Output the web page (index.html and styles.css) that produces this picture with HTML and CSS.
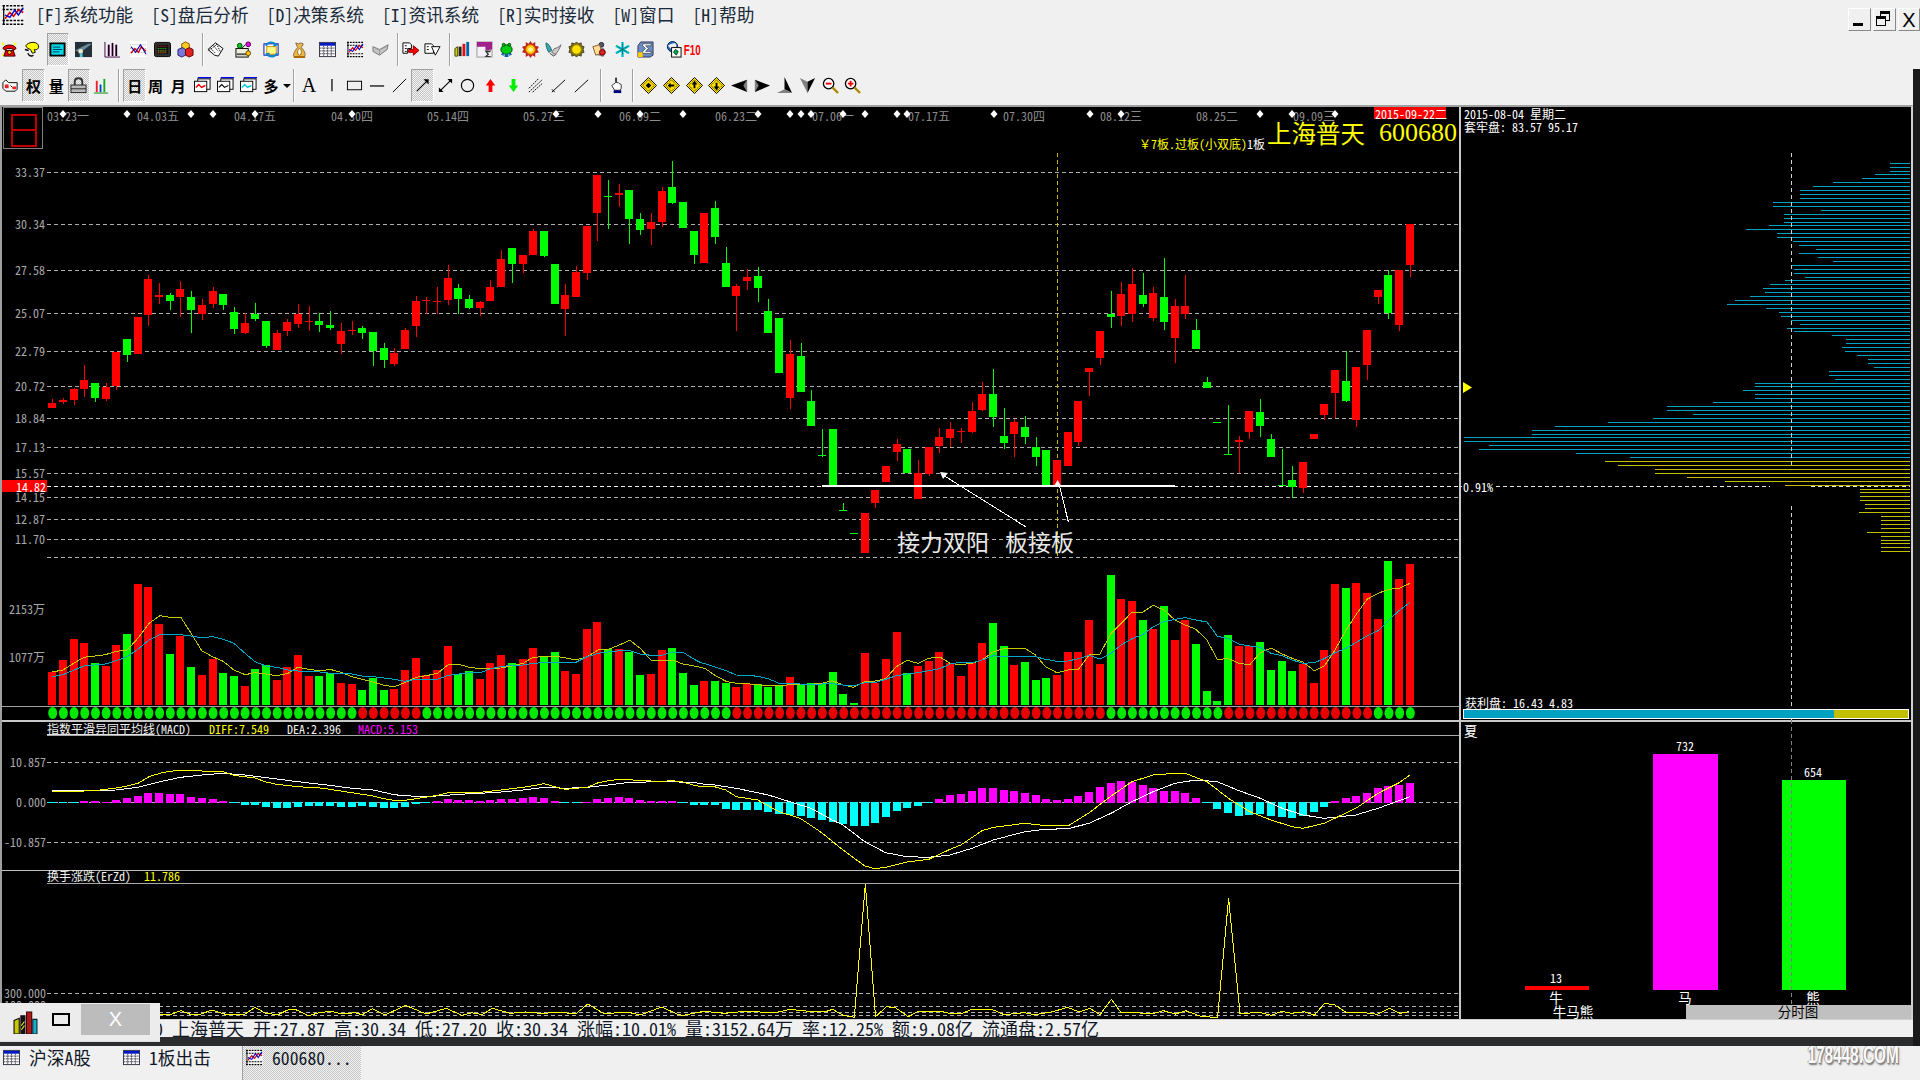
FILE: index.html
```html
<!DOCTYPE html>
<html lang="zh">
<head>
<meta charset="utf-8">
<title>上海普天 600680</title>
<link rel="stylesheet" href="styles.css">
</head>
<body>
<svg class="defs" aria-hidden="true">
  <symbol id="logo" viewBox="0 0 18 18">
    <rect width="18" height="18" fill="#f4f4f4"/>
    <path d="M0 1.500h18M0 4.500h18M0 13.500h18M0 16.500h18" stroke="#000" stroke-width="1.200" stroke-dasharray="2 1"/>
    <path d="M1 1v16" stroke="#000"/>
    <path d="M2 12l4-5 3 3 4-5 4 2" fill="none" stroke="#d00" stroke-width="1.300"/>
    <path d="M2 9l4 2 4-6 3 4 4-6" fill="none" stroke="#00c" stroke-width="1.100"/>
  </symbol>
  <symbol id="table" viewBox="0 0 18 18">
    <rect x=".5" y="1.500" width="17" height="15" fill="#fff" stroke="#334"/>
    <rect x="1" y="2" width="16" height="3" fill="#0018c8"/>
    <path d="M1 7.500h16M1 10.500h16M1 13.500h16M5 5v11M9 5v11M13 5v11" stroke="#445" stroke-dasharray="1.500 .5"/>
  </symbol>
  <symbol id="diamond" viewBox="0 0 18 18">
    <path d="M9 .5L17.500 9 9 17.500 .5 9z" fill="#ffe000" stroke="#000"/>
    <path d="M9 3L15 9 9 15 3 9z" fill="none" stroke="#000" stroke-dasharray="1 1"/>
  </symbol>
</svg>

<header class="menubar">
  <svg class="logo"><use href="#logo"/></svg>
  <nav class="menu">
    <span>[F]系统功能</span><span>[S]盘后分析</span><span>[D]决策系统</span><span>[I]资讯系统</span><span>[R]实时接收</span><span>[W]窗口</span><span>[H]帮助</span>
  </nav>
  <div class="winbtns">
    <button class="wb" aria-label="最小化"><i class="wb-min"></i></button>
    <button class="wb" aria-label="还原"><i class="wb-r1"></i><i class="wb-r2"></i></button>
    <button class="wb wb-x" aria-label="关闭">X</button>
  </div>
</header>

<div class="toolbar t1">
  <span class="b first"><svg viewBox="0 0 18 18"><path d="M1 2l2 2M16 2l-2 2M1 15l2-1" stroke="#ff0" stroke-width="2"/><path d="M2 8c1-5 13-5 14 0l-3 2-1-2H6L5 10z" fill="#e00" stroke="#300"/><path d="M3 16l2-6h8l2 6z" fill="#e00" stroke="#300"/><circle cx="9" cy="12" r="2" fill="#fc0" stroke="#300"/></svg></span>
  <span class="b"><svg viewBox="0 0 18 18"><path d="M3 5c2-4 11-5 13-1s-2 6-4 5l1 3-3 1-2-4C6 8 4 8 3 5z" fill="#ff0" stroke="#000"/><path d="M2 9l4 1M5 13c2 4 5 3 6 2" fill="none" stroke="#000" stroke-width="1.500"/></svg></span>
  <span class="b g4 on"><svg viewBox="0 0 18 18"><rect x=".5" y="1.500" width="17" height="15" rx="1" fill="#000"/><rect x="2.500" y="3.500" width="13" height="11" fill="#00d8e8"/><path d="M4 6.500h8M4 9h10M4 11.500h7" stroke="#003a60"/></svg></span>
  <span class="b g4"><svg viewBox="0 0 18 18"><rect width="18" height="16" y="1" fill="#243038"/><path d="M0 10L14 3l4 0-12 9z" fill="#6a8a9a"/><circle cx="6" cy="11" r="2.500" fill="#e8e8c8"/><path d="M5 13h3v4H5z" fill="#5cc8e0"/></svg></span>
  <span class="b g7"><svg viewBox="0 0 18 18"><path d="M1 1v16h16" fill="none" stroke="#404"/><path d="M4 4h2v12H4zM8 2h2v14H8zM12 4h2v12h-2z" fill="#606"/><path d="M5 4v12M9 2v14M13 4v12" stroke="#000"/></svg></span>
  <span class="b g4"><svg viewBox="0 0 18 18"><rect width="18" height="17" fill="#fff"/><path d="M0 4h18M0 8h18M0 12h18" stroke="#aaa" stroke-dasharray="1 1"/><path d="M1 13l4-5 4 4 3-6 5 5" fill="none" stroke="#d00" stroke-width="1.400"/><path d="M1 6l5 6 5-8 6 10" fill="none" stroke="#00a" stroke-width="1.100"/></svg></span>
  <span class="b g2"><svg viewBox="0 0 18 18"><rect x=".5" y="1.500" width="17" height="15" rx="2" fill="#333" stroke="#000"/><rect x="3" y="4" width="12" height="10" fill="#111"/><path d="M4 5.500h10" stroke="#e22" stroke-dasharray="1 1"/><path d="M4 8h10" stroke="#2e2" stroke-dasharray="1 1"/><path d="M4 10.500h10" stroke="#ee2" stroke-dasharray="1 1"/><path d="M4 12.500h10" stroke="#e82" stroke-dasharray="1 1"/></svg></span>
  <span class="b g1"><svg viewBox="0 0 18 18"><path d="M9 1l4 2v5l-4 2-4-2V3z" fill="#fc2" stroke="#850"/><path d="M1 9l5-2 3 2v6l-4 2-4-2z" fill="#77d" stroke="#226"/><path d="M9 9l4-2 4 2v6l-4 2-4-2z" fill="#d22" stroke="#600"/></svg></span>
  <i class="sep"></i>
  <span class="b"><svg viewBox="0 0 18 18"><path d="M9 2L17 8l-5 8-4-1-7-6z" fill="#fff" stroke="#000"/><path d="M4 8l5 5M7 5l5 6M10 3l4 8M2 10l8-6" stroke="#000" stroke-dasharray="1.500 1"/></svg></span>
  <span class="b g6"><svg viewBox="0 0 18 18"><rect x="1" y="8" width="13" height="9" fill="#eed" stroke="#000"/><path d="M2 14h10" stroke="#555" stroke-width="2"/><circle cx="5" cy="5" r="2.500" fill="#0c2" stroke="#040"/><circle cx="14" cy="3.500" r="2.500" fill="#e0e" stroke="#404"/><circle cx="14" cy="13" r="2.500" fill="#fc0" stroke="#640"/><path d="M7 8l4-4" stroke="#000"/></svg></span>
  <span class="b g6"><svg viewBox="0 0 18 18"><rect x="1" y="3" width="15" height="12" fill="#fff" stroke="#00a"/><rect x="4" y="6" width="10" height="8" fill="#ff8" stroke="#c80"/><path d="M3 5c3-5 8-4 11-1l-3 1M15 13c-3 5-8 4-11 1l3-1" fill="none" stroke="#08c" stroke-width="2"/></svg></span>
  <span class="b g6"><svg viewBox="0 0 18 18"><path d="M5 17c-3 0-3-2-1-6 1-2 2-3 3-4L5 2l3 1 2-1 3 1-2 4c2 2 4 5 4 7 0 2-1 3-3 3z" fill="#e8b848" stroke="#864"/><ellipse cx="9" cy="11.500" rx="2" ry="3.500" fill="#fff" stroke="#a60"/><path d="M3 17h12" stroke="#a60" stroke-width="2"/></svg></span>
  <span class="b g6"><svg class="ic16"><use href="#table"/></svg></span>
  <span class="b g6"><svg viewBox="0 0 18 18"><use href="#logo"/></svg></span>
  <span class="b g3"><svg viewBox="0 0 18 18"><path d="M1 6l7 3 9-5-1 5-8 6-7-4z" fill="#c4c4c4" stroke="#777"/><path d="M8 9v6M3 7l5 3M9 9l6-3" stroke="#999"/></svg></span>
  <i class="sep"></i>
  <span class="b"><svg viewBox="0 0 18 18"><path d="M1 2h7l2 2v4H6v5H1z" fill="#fff" stroke="#000"/><path d="M3 5h2M3 8h2M3 11h2" stroke="#000"/><path d="M7 9h5V5l6 5-6 5v-3H7z" fill="#f00" stroke="#800"/></svg></span>
  <span class="b"><svg viewBox="0 0 18 18"><path d="M1 3h7l2 2v8H1z" fill="#fff" stroke="#000"/><path d="M3 6h2M3 9h2" stroke="#000"/><path d="M8 6h9l-5 9z" fill="#fff" stroke="#000"/></svg></span>
  <i class="sep"></i>
  <span class="b"><svg viewBox="0 0 18 18"><path d="M1 8l3-2v10H1z" fill="#cc0" stroke="#440"/><path d="M5 6h3v10H5z" fill="#222"/><path d="M9 3h3v13H9z" fill="#d11"/><path d="M13 1h3v15h-3z" fill="#06a"/></svg></span>
  <span class="b"><svg viewBox="0 0 18 18"><rect x="1" y="1" width="16" height="16" fill="#f4f0f8" stroke="#999"/><path d="M1 1h16v8l-7 1v-4H1z" fill="#a0208c"/><path d="M9 10h7l-1 2h-3l2 2-2 2h3l1 1H9l3-3z" fill="#333"/></svg></span>
  <span class="b"><svg viewBox="0 0 18 18"><ellipse cx="9" cy="9" rx="6" ry="5" fill="#0c1"  stroke="#040"/><circle cx="6" cy="4" r="1.500" fill="#0c1" stroke="#040"/><circle cx="12" cy="4" r="1.500" fill="#0c1" stroke="#040"/><path d="M3 14l3-2v4zM15 14l-3-2v4zM7 14h4v3H7z" fill="#005ca8"/></svg></span>
  <span class="b g2"><svg viewBox="0 0 18 18"><path d="M9 0l2 3 3-2v4l4 1-2 3 2 3-4 1v4l-3-2-2 3-2-3-3 2v-4l-4-1 2-3-2-3 4-1V1l3 2z" fill="#b22"/><circle cx="9" cy="9" r="5" fill="#ffd000" stroke="#e60"/><circle cx="9" cy="9" r="2.500" fill="#fff8a0"/></svg></span>
  <span class="b g1"><svg viewBox="0 0 18 18"><path d="M1 2c3 1 5 4 6 8l-3 2C2 9 1 5 1 2z" fill="#3aa8b0" stroke="#266"/><path d="M17 4c-2 5-4 8-6 10l-4-2 3-4c2 0 5-2 7-4z" fill="#ccc" stroke="#666"/><path d="M5 13l4 3 3-2" fill="#bbb" stroke="#555"/></svg></span>
  <span class="b g1"><svg viewBox="0 0 18 18"><path d="M9 1l2 2 3-1v3l3 1-1 3 1 3-3 1v3l-3-1-2 2-2-2-3 1v-3l-3-1 1-3-1-3 3-1V2l3 1z" fill="#7a7000" stroke="#443"/><circle cx="9" cy="9" r="5" fill="#ffe000" stroke="#a80"/></svg></span>
  <span class="b g1"><svg viewBox="0 0 18 18"><circle cx="11" cy="4" r="2.500" fill="#556" stroke="#223"/><path d="M7 8l6-1 3 5-3 5-6-2z" fill="#889"/><path d="M2 6l7-2 3 9-7 2z" fill="#ffdf90" stroke="#853"/><circle cx="12" cy="12" r="3" fill="#d22" stroke="#600"/></svg></span>
  <span class="b g1"><svg viewBox="0 0 18 18"><path d="M9 1v16M2 5l14 8M16 5L2 13" stroke="#00bcc8" stroke-width="2.400"/><path d="M9 3v12M4 6l10 6M14 6L4 12" stroke="#000" stroke-width=".6" stroke-dasharray="1 1"/></svg></span>
  <span class="b g1"><svg viewBox="0 0 18 18"><path d="M4 1h13v14l-3 2H1V5z" fill="#6a8cc0" stroke="#335"/><path d="M6 3h9v2H9l3 3-3 3h6v2H6v-2l3-3-3-3z" fill="#fff" stroke="#000" stroke-width=".5"/><rect x="1" y="12" width="5" height="5" fill="#fc0"/></svg></span>
  <span class="b g6"><svg viewBox="0 0 18 18"><circle cx="8" cy="6" r="5.500" fill="#1868c8" stroke="#024"/><path d="M3 5c3-2 8-4 9-1s-3 4-5 5" fill="#eee"/><rect x="7" y="7" width="10" height="10" fill="#fff" stroke="#000"/><path d="M9 12l2-3 3 2-2 4z" fill="#0a6" stroke="#040"/></svg></span>
  <span class="b f10">F10</span>
</div>

<main class="frame">
  <div class="col">
    <div class="toolbar t2">
      <span class="b first2"><svg viewBox="0 0 18 18"><path d="M1 6l3-3 3 3h9v7l-2 2H4l-3-3z" fill="#fff" stroke="#000"/><path d="M3 8h4v4H3zM11 10h4v3h-4z" fill="#e22"/><path d="M9 9l2 2" stroke="#000"/></svg></span>
      <span class="b on tx">权</span>
      <span class="b tx">量</span>
      <span class="b on"><svg viewBox="0 0 18 18"><path d="M5 9V5c0-5 8-5 8 0v4" fill="none" stroke="#333" stroke-width="2"/><rect x="1" y="8.500" width="16" height="8" fill="#bbb" stroke="#222"/><path d="M1 12.500h16" stroke="#222"/></svg></span>
      <span class="b"><svg viewBox="0 0 18 18"><path d="M4 4v12" stroke="#e22" stroke-width="2"/><path d="M8 8v8" stroke="#14c" stroke-width="2"/><path d="M12 2v14" stroke="#1a2" stroke-width="2"/><path d="M1 17h15" stroke="#080"/></svg></span>
      <i class="sep s2"></i>
      <span class="b on tx">日</span>
      <span class="b tx gm2">周</span>
      <span class="b tx">月</span>
      <span class="b g2"><svg viewBox="0 0 18 18"><path d="M4 .5h14" stroke="#00f" stroke-width="2"/><rect x="4" y="2" width="13" height="11" fill="#fff" stroke="#000"/><rect x=".5" y="4.500" width="13" height="11" fill="#fff" stroke="#000"/><path d="M2 11l3-3 3 3 4-2" fill="none" stroke="#e00" stroke-width="1.500"/></svg></span>
      <span class="b"><svg viewBox="0 0 18 18"><path d="M4 .5h14" stroke="#00f" stroke-width="2"/><rect x="4" y="2" width="13" height="11" fill="#fff" stroke="#000"/><rect x=".5" y="4.500" width="13" height="11" fill="#fff" stroke="#000"/><path d="M2 11l3-3 3 3 4-2" fill="none" stroke="#000" stroke-width="1.200"/></svg></span>
      <span class="b"><svg viewBox="0 0 18 18"><path d="M4 .5h14" stroke="#00f" stroke-width="2"/><rect x="4" y="2" width="13" height="11" fill="#fff" stroke="#000"/><rect x=".5" y="4.500" width="13" height="11" fill="#fff" stroke="#000"/><path d="M2 11l3-3 3 3 4-2" fill="none" stroke="#0cd" stroke-width="1.500"/></svg></span>
      <span class="b tx">多</span>
      <i class="caret"></i>
      <i class="sep s3"></i>
      <span class="b txa">A</span>
      <span class="b"><svg viewBox="0 0 18 18"><path d="M9.500 2v13" stroke="#000" stroke-width="1.300"/></svg></span>
      <span class="b"><svg viewBox="0 0 18 18"><rect x="1.500" y="4.500" width="15" height="9" fill="none" stroke="#000"/></svg></span>
      <span class="b"><svg viewBox="0 0 18 18"><path d="M1 9.500h15" stroke="#000" stroke-width="1.300"/></svg></span>
      <span class="b"><svg viewBox="0 0 18 18"><path d="M2 16L16 2" stroke="#000"/></svg></span>
      <span class="b on"><svg viewBox="0 0 18 18"><path d="M3 15L14 4" stroke="#000" stroke-width="1.200"/><path d="M15.500 2.500V8L10 2.500z" fill="#000"/></svg></span>
      <span class="b"><svg viewBox="0 0 18 18"><path d="M3 15L15 3" stroke="#000" stroke-width="1.200"/><path d="M16 2v5l-5-5zM2 16v-5l5 5z" fill="#000"/></svg></span>
      <span class="b"><svg viewBox="0 0 18 18"><circle cx="9" cy="9" r="6.500" fill="none" stroke="#000" stroke-width="1.200"/></svg></span>
      <span class="b"><svg viewBox="0 0 18 18"><path d="M9 2l5 7h-3v7H7V9H4z" fill="#f00"/></svg></span>
      <span class="b"><svg viewBox="0 0 18 18"><path d="M9 16l5-7h-3V2H7v7H4z" fill="#0e0"/></svg></span>
      <span class="b"><svg viewBox="0 0 18 18"><path d="M2 16L16 3M2 12L12 2M6 16L16 7" stroke="#000" stroke-dasharray="2 1"/></svg></span>
      <span class="b"><svg viewBox="0 0 18 18"><path d="M2 16L16 3M2 13l3 3" stroke="#000"/></svg></span>
      <span class="b"><svg viewBox="0 0 18 18"><path d="M2 16L16 3" stroke="#000"/></svg></span>
      <i class="sep s4"></i>
      <span class="b narrow"><svg viewBox="0 0 18 18"><path d="M8 6V1h1v5l2 0 1 1 2 1v4l-1 2H7L4 9z" fill="#fff" stroke="#000" stroke-width=".8"/><rect x="6" y="14" width="8" height="3" fill="#00007a"/></svg></span>
      <i class="sep s5"></i>
      <span class="b narrow2"><svg viewBox="0 0 18 18"><use href="#diamond"/><path d="M9 6l3 3-3 3-3-3z" fill="#000"/></svg></span>
      <span class="b"><svg viewBox="0 0 18 18"><use href="#diamond"/><path d="M5 9l3-3v2h4v2H8v2z" fill="#000"/></svg></span>
      <span class="b"><svg viewBox="0 0 18 18"><use href="#diamond"/><path d="M9 4l3 4h-2v4H8V8H6z" fill="#000"/></svg></span>
      <span class="b"><svg viewBox="0 0 18 18"><use href="#diamond"/><path d="M9 14l3-4h-2V6H8v4H6z" fill="#000"/></svg></span>
      <span class="b"><svg viewBox="0 0 18 18"><path d="M0 9L17 3v13z" fill="#000"/><path d="M17 3l-4 6 4 7z" fill="#808080"/></svg></span>
      <span class="b"><svg viewBox="0 0 18 18"><path d="M17 9L1 3v13z" fill="#000"/><path d="M1 3l4 6-4 7z" fill="#808080"/></svg></span>
      <span class="b"><svg viewBox="0 0 18 18"><path d="M9 0l8 17-8-4z" fill="#000"/><path d="M9 13l8 4H1z" fill="#808080"/></svg></span>
      <span class="b"><svg viewBox="0 0 18 18"><path d="M1 1l8 4v12z" fill="#808080"/><path d="M17 1L9 5v12z" fill="#000"/></svg></span>
      <span class="b"><svg viewBox="0 0 18 18"><circle cx="7" cy="7" r="5.500" fill="#fff" stroke="#000" stroke-width="1.400"/><path d="M4 7h6" stroke="#e00" stroke-width="2"/><path d="M11 11l6 6" stroke="#a80" stroke-width="2.400"/></svg></span>
      <span class="b"><svg viewBox="0 0 18 18"><circle cx="7" cy="7" r="5.500" fill="#fff" stroke="#000" stroke-width="1.400"/><path d="M4 7h6M7 4v6" stroke="#e00" stroke-width="2"/><path d="M11 11l6 6" stroke="#a80" stroke-width="2.400"/></svg></span>
    </div>

    <section class="workspace">
      <svg id="kline" class="pane-k" viewBox="2 107 1457 913"></svg>
      <svg id="chips" class="pane-c" viewBox="1461 107 450 913"></svg>
    </section>

    <div class="status">600680 上海普天 开:27.87 高:30.34 低:27.20 收:30.34 涨幅:10.01% 量:3152.64万 率:12.25% 额:9.08亿 流通盘:2.57亿</div>
  </div>
  <div class="strip"></div>
</main>

<footer class="taskbar">
  <div class="task"><svg class="ic16"><use href="#table"/></svg><span>沪深A股</span></div>
  <div class="task"><svg class="ic16"><use href="#table"/></svg><span>1板出击</span></div>
  <div class="task active"><svg class="ic16"><use href="#logo"/></svg><span>600680...</span></div>
  <div class="watermark">178448.COM</div>
</footer>

<aside class="floatwin">
  <svg class="books" viewBox="0 0 24 22"><path d="M1 9l5-2v15H1z" fill="#c8c800" stroke="#000"/><path d="M7 4h5v18H7z" fill="#111"/><path d="M8 14l3-4M8 18l3-4" stroke="#ee0"/><path d="M13 1h5v21h-5z" fill="#b01818" stroke="#300"/><path d="M19 8h4v14h-4z" fill="#18b0c8" stroke="#023"/></svg>
  <i class="fsq"></i>
  <div class="fx">X</div>
</aside>

<script src="chart.js"></script>
</body>
</html>
```
FILE: styles.css
```css
* { box-sizing: border-box; }
html, body { margin: 0; padding: 0; width: 1920px; height: 1080px; overflow: hidden; }
body {
  background: #f0f0f0;
  color: #101828;
  font-family: "Noto Sans Mono CJK SC", "Noto Sans CJK SC", "Liberation Mono", monospace;
  font-size: 17.7px;
  position: relative;
}
.defs { position: absolute; width: 0; height: 0; }
svg { display: block; }

.menubar { height: 27px; display: flex; align-items: center; }
.logo { width: 23px; height: 22px; margin: 2px 0 0 2px; }
.menu { display: flex; gap: 18px; margin-left: 11px; line-height: 27px; padding-top: 2px; color: #1a2a3a; }
.winbtns { margin-left: auto; display: flex; gap: 2px; padding-top: 12px; }
.wb {
  width: 23px; height: 23px; padding: 0; position: relative; background: #f0f0f0;
  border: 1px solid; border-color: #fff #888 #888 #fff;
  font: 20px "Liberation Sans", sans-serif; color: #000; line-height: 20px;
}
.wb-x { width: 22px; }
.wb-min { position: absolute; left: 4px; bottom: 4px; width: 10px; height: 3px; background: #000; }
.wb-r1, .wb-r2 { position: absolute; width: 10px; height: 10px; border: 1px solid #000; border-top-width: 3px; background: #f0f0f0; }
.wb-r1 { left: 6px; top: 2px; }
.wb-r2 { left: 2px; top: 7px; }

.toolbar { display: flex; align-items: center; }
.t1 { height: 42px; padding-top: 2px; }
.t2 { height: 36px; padding-bottom: 3px; background: #f0f0f0; }
.b {
  width: 22px; height: 33px; flex: none; display: flex; align-items: center; justify-content: center;
  color: #000;
}
.b svg { width: 17px; height: 17px; }
.t2 .b { width: 22.7px; }
.first { margin-left: -1.500px; }
.first2 { margin-left: -.500px; }
.g1 { margin-left: 1px; }
.g2 { margin-left: 2px; }
.g3 { margin-left: 3px; }
.g4 { margin-left: 4px; }
.g6 { margin-left: 6px; }
.g7 { margin-left: 7px; }
.gm2 { margin-left: -2px; }
.on {
  border: 1px solid; border-color: #a0a0a0 #fff #fff #a0a0a0;
  background: repeating-conic-gradient(#c4c4c4 0 25%, #f4f4f4 0 50%) 0 0 / 2px 2px;
}
.sep {
  width: 2px; height: 33px; flex: none; background: #a0a0a0; border-right: 1px solid #fff;
  margin: 0 1px 0 5px;
}
.t2 .s2 { margin: 0 3.500px 0 5px; }
.t2 .s3 { margin: 0 2.500px 0 2px; }
.t2 .s4 { margin: 0 1px 0 7px; }
.t2 .s5 { margin: 0 1px 0 5px; }
.narrow { margin-left: 2px; }
.narrow2 { margin-left: 2px; }
.tx { font-family: "Noto Sans CJK SC", sans-serif; font-weight: 700; font-size: 15px; }
.txa { font: 20px "Liberation Serif", serif; }
.f10 { font: bold 15px "Liberation Sans", sans-serif; color: #f00; transform: scaleX(.65); transform-origin: left center; }
.caret { width: 0; height: 0; flex: none; border: 4px solid transparent; border-top: 4px solid #000; border-bottom: 0; margin-left: 1px; }

.frame { height: 977px; display: flex; background: #2a2c2e; }
.col { width: 1913px; display: flex; flex-direction: column; }
.strip { flex: 1; background: #1a1a1a; }

.workspace {
  height: 915px; display: flex; background: #000;
  border-top: 2px solid #a0a0a0; border-left: 2px solid #a0a0a0; border-right: 2px solid #d0d0d0;
}
.pane-k { width: 1457px; height: 913px; }
.pane-c { width: 450px; height: 913px; border: 0; margin-left: 2px; box-shadow: -2px 0 0 #c8c8c8; }

.status {
  height: 17px; line-height: 17px; font-size: 18px; background: #f0f0f0; padding-left: 109px; white-space: pre; color: #101828;
}

.taskbar { height: 34px; display: flex; align-items: center; position: relative; background: #f0f0f0; }
.task { display: flex; align-items: center; height: 34px; gap: 9px; padding: 0 0 12px 3px; width: 120px; line-height: 22px; }
.ic16 { width: 17px; height: 17px; }
.task.active {
  width: 119px; margin-left: 2px;
  background: repeating-conic-gradient(#c4c4c4 0 25%, #f4f4f4 0 50%) 0 0 / 2px 2px;
  border-left: 1px solid #a0a0a0;
}
.watermark {
  position: absolute; right: 21px; top: -5px;
  font: bold 24px "Liberation Sans", sans-serif; color: #fafafa;
  transform: scaleX(.64); transform-origin: right center;
  text-shadow: 1px 1px 0 #888, 2px 2px 2px #777, -1px 0 0 #999;
}

.floatwin {
  position: absolute; left: 0; top: 1003px; width: 160px; height: 39px;
  background: #ececec; display: flex; align-items: flex-start; border-bottom: 1px solid #ddd;
}
.books { width: 25px; height: 23px; margin: 8px 0 0 13px; }
.fsq { width: 18px; height: 13px; border: 2px solid #000; margin: 10px 0 0 14px; }
.fx {
  width: 69px; height: 31px; background: #bcbcbc; margin: 1px 0 0 11px; color: #fff;
  font: 20px/31px "Liberation Sans", sans-serif; text-align: center;
}

.t { font-family: "Noto Sans Mono CJK SC", "Noto Sans CJK SC", "Liberation Mono", monospace; font-size: 12px; dominant-baseline: central; }
.big { font-family: "Noto Sans CJK SC", sans-serif; font-size: 24.500px; }
.code { font-family: "Liberation Serif", serif; font-size: 26px; }
.note { font-family: "Noto Sans CJK SC", sans-serif; font-size: 23px; }
.mid { font-size: 13.500px; }
.crisp { shape-rendering: crispEdges; }
```
FILE: chart.js
```js
(function () {
  var NS = 'http://www.w3.org/2000/svg';
  var K = document.getElementById('kline');
  var C = document.getElementById('chips');
  var RED = '#ff0000', GRN = '#00ff00';

  function el(p, n, a, txt) {
    var e = document.createElementNS(NS, n);
    for (var k in a) e.setAttribute(k, a[k]);
    if (txt !== undefined) e.textContent = txt;
    p.appendChild(e);
    return e;
  }
  function rect(p, x, y, w, h, f) { return el(p, 'rect', { x: x, y: y, width: w, height: h, fill: f, class: 'crisp' }); }
  function hline(p, x1, x2, y, col, dash, sw) {
    var a = { x1: x1, x2: x2, y1: y + .5, y2: y + .5, stroke: col, 'stroke-width': sw || 1, class: 'crisp' };
    if (dash) a['stroke-dasharray'] = dash;
    return el(p, 'line', a);
  }
  function vline(p, x, y1, y2, col, dash) {
    var a = { x1: x + .5, x2: x + .5, y1: y1, y2: y2, stroke: col, class: 'crisp' };
    if (dash) a['stroke-dasharray'] = dash;
    return el(p, 'line', a);
  }
  function txt(p, x, y, s, col, anchor, cls) {
    return el(p, 'text', { x: x, y: y - 1, fill: col, 'text-anchor': anchor || 'start', class: 't ' + (cls || '') }, s);
  }
  function X(i) { return 52.2 + 10.69 * i; }
  function line(p, pts, col, sw) {
    return el(p, 'polyline', { points: pts.map(function (q) { return q[0].toFixed(1) + ',' + q[1].toFixed(1); }).join(' '), fill: 'none', stroke: col, 'stroke-width': sw || 1, class: 'crisp' });
  }
  // points read from the crops: helpers map them back to page pixels
  function p6(a) { return a.map(function (q) { return [q[0] / 2.24, q[1] / 3 + 560]; }); }
  function p7(a) { return a.map(function (q) { return [700 + q[0] / 2.063, q[1] / 3 + 560]; }); }
  function p8(a) { return a.map(function (q) { return [q[0] / 1.96, q[1] / 3 + 880]; }); }
  function p11(a) { return a.map(function (q) { return [800 + q[0] / 2.45, q[1] / 3 + 880]; }); }

  /* ---- grid ---- */
  var GRID = '#b0b0b0', DASH = '4 3';
  [[172, '33.37'], [224, '30.34'], [270, '27.58'], [313, '25.07'], [351, '22.79'], [386, '20.72'], [418, '18.84'], [447, '17.13'], [473, '15.57'], [497, '14.15'], [519, '12.87'], [539, '11.70'], [557, '']].forEach(function (g) {
    hline(K, 47, 1459, g[0], GRID, DASH);
    if (g[1]) txt(K, 45, g[0], g[1], '#a8a8a8', 'end');
  });
  hline(K, 47, 1459, 486, '#f0f0f0', DASH);

  /* ---- date axis ---- */
  [[47, '03.23一'], [137, '04.03五'], [234, '04.17五'], [331, '04.30四'], [427, '05.14四'], [523, '05.27三'], [619, '06.09二'], [715, '06.23二'], [812, '07.06一'], [908, '07.17五'], [1003, '07.30四'], [1100, '08.12三'], [1196, '08.25二'], [1293, '09.09三']].forEach(function (d) {
    txt(K, d[0], 116, d[1], '#8c8c8c');
  });
  [63, 127, 191, 213, 255, 352, 556, 598, 640, 683, 758, 790, 801, 811, 843, 865, 897, 907, 994, 1090, 1121, 1260, 1292, 1335].forEach(function (x) {
    el(K, 'path', { d: 'M' + x + ' 110l3.500 4 -3.500 4 -3.500 -4z', fill: '#fff' });
  });
  rect(K, 1374, 107, 72, 12, RED);
  txt(K, 1375, 114, '2015-09-22二', '#fff');

  /* ---- 日 period badge ---- */
  el(K, 'rect', { x: 3.5, y: 107.5, width: 39, height: 41, fill: 'none', stroke: '#808080', class: 'crisp' });
  el(K, 'path', { d: 'M12 115h24v31H12zM12 130h24', fill: 'none', stroke: '#c00000', 'stroke-width': 2, class: 'crisp' });
  rect(K, 2, 480, 45, 12, RED);
  txt(K, 46, 487, '14.82', '#fff', 'end');

  /* ---- title ---- */
  var yel = '#ffff00';
  el(K, 'text', { x: 1267, y: 132, fill: yel, class: 't big' }, '上海普天');
  el(K, 'text', { x: 1379, y: 132, fill: yel, class: 't code' }, '600680');
  var hd = txt(K, 1139, 144, '', yel, 'start');
  el(hd, 'tspan', {}, '￥7板.过板(小双底)');
  el(hd, 'tspan', { fill: '#fff' }, '1板');

  /* ---- candles: colour, wick top, body top, body bottom, wick bottom (crop y, /3 + 130) ---- */
  var CS = [
    [1,808,819,833,833],[1,805,810,816,822],[1,775,778,810,825],[1,706,750,777,800],[0,760,760,804,816],[1,760,771,807,813],[1,666,666,768,779],[0,627,627,675,696],[1,561,561,672,672],[1,435,447,555,588],
    [1,460,495,500,522],[0,490,495,513,540],[1,453,477,501,561],[0,483,501,540,609],[1,507,525,552,570],[1,471,483,522,534],[0,492,492,525,540],[0,531,546,597,612],[1,549,579,609,612],[0,519,552,567,573],
    [0,573,573,648,654],[1,600,609,660,660],[1,567,576,603,618],[1,522,552,582,594],[1,528,573,576,603],[0,549,573,585,606],[0,543,585,594,600],[1,579,603,642,672],[1,573,600,603,615],[0,588,594,609,627],
    [0,606,606,663,708],[0,639,654,690,714],[1,654,669,702,708],[1,594,600,657,657],[1,498,513,588,621],[1,501,510,513,552],[1,471,513,516,552],[1,405,444,510,525],[0,462,474,507,552],[0,495,507,534,537],
    [1,513,516,534,558],[1,450,471,513,513],[1,360,387,471,471],[0,354,354,402,459],[1,375,375,402,429],[1,297,303,375,375],[0,303,303,378,381],[0,402,402,522,522],[1,462,495,537,618],[1,408,426,501,501],
    [1,288,288,429,450],[1,135,135,249,333],[0,150,198,201,297],[1,162,189,195,231],[0,180,180,267,342],[0,249,267,300,315],[1,249,276,297,345],[1,171,183,276,291],[0,93,171,219,222],[0,216,216,294,294],
    [0,303,303,375,402],[1,249,249,399,399],[0,213,234,321,342],[0,351,399,471,471],[1,462,468,498,603],[1,417,441,453,480],[0,411,438,474,516],[0,507,543,609,609],[0,564,564,729,729],[1,630,672,804,837],
    [0,639,678,786,786],[0,780,813,888,888],[0,897,975,978,981],[0,897,897,1065,1065],[0,1119,1140,1143,1143],[0,1209,1209,1212,1212],[1,1149,1149,1269,1269],[1,1080,1080,1119,1134],[1,1008,1008,1056,1056],[1,927,942,966,993],
    [0,957,957,1029,1029],[1,990,1029,1107,1107],[1,951,951,1032,1038],[1,894,921,948,969],[1,876,897,924,951],[1,894,903,906,939],[1,816,843,906,909],[1,756,792,840,843],[0,717,792,861,891],[0,834,918,939,957],
    [1,867,876,912,981],[0,858,891,921,942],[0,921,951,981,1008],[0,960,960,1065,1065],[1,990,990,1065,1065],[1,906,906,1008,1008],[1,813,813,936,948],[1,714,714,726,798],[1,603,603,684,705],[0,483,552,561,594],
    [1,456,492,558,588],[1,414,462,552,576],[0,429,495,522,531],[1,471,489,564,573],[0,384,501,576,600],[1,507,528,624,699],[1,435,528,552,567],[0,567,600,657,657],[0,741,756,774,774],[0,876,876,879,879],
    [0,825,972,975,975],[1,918,930,936,1029],[1,843,843,906,927],[0,807,846,888,921],[0,912,927,981,981],[0,957,1065,1068,1068],[0,1008,1050,1071,1104],[1,996,996,1074,1089],[1,912,912,927,927],[1,822,822,855,870],
    [1,720,720,789,864],[0,663,753,813,816],[1,711,711,870,891],[1,600,600,705,750],[1,480,480,501,522],[0,420,435,549,567],[1,420,420,585,603],[1,282,282,405,441]
  ];
  function zy(z) { return Math.round(130 + z / 3); }
  // crosshair sits behind the annotations
  vline(K, 1057, 153, 558, '#c8b400', '4 3');
  CS.forEach(function (c, i) {
    var x = Math.round(X(i)), col = c[0] ? RED : GRN;
    rect(K, x, zy(c[1]), 1, Math.max(1, zy(c[4]) - zy(c[1])), col);
    rect(K, x - 4, zy(c[2]), 8, Math.max(1, zy(c[3]) - zy(c[2])), col);
  });

  /* ---- annotation ---- */
  el(K, 'rect', { x: 822, y: 485, width: 353, height: 2, fill: '#fff', class: 'crisp' });
  el(K, 'line', { x1: 1026, y1: 527, x2: 943, y2: 475, stroke: '#fff', class: 'crisp' });
  el(K, 'polygon', { points: '940,472 948,473 943,479', fill: '#fff' });
  el(K, 'line', { x1: 1068.5, y1: 522.5, x2: 1058.5, y2: 482, stroke: '#fff', class: 'crisp' });
  el(K, 'polygon', { points: '1057.7,480 1054,486 1061,486', fill: '#fff' });
  el(K, 'text', { x: 897, y: 541, fill: '#e8e8e8', class: 't note' }, '接力双阳');
  el(K, 'text', { x: 1005, y: 541, fill: '#e8e8e8', class: 't note' }, '板接板');

  /* ---- volume ---- */
  var VT = [336,300,237,249,309,318,255,222,72,81,192,282,228,321,345,297,339,348,378,327,315,360,321,285,348,348,339,369,372,390,354,390,387,330,294,345,330,258,342,333,357,309,285,309,297,264,288,276,333,342,207,186,267,267,276,345,342,270,264,339,375,
    363,363,369,381,372,372,381,378,351,372,369,369,336,402,429,279,369,297,216,339,318,303,276,309,348,309,249,189,258,315,306,360,354,345,276,276,180,312,45,117,123,180,207,138,240,180,252,393,423,225,258,258,246,330,303,333,312,369,270,72,84,69,99,177,3,57,12];
  VT.forEach(function (z, i) {
    var y = Math.round(560 + z / 3);
    rect(K, Math.round(X(i)) - 4, y, 8, 705 - y, CS[i][0] ? RED : GRN);
  });
  var MAY = p6([[117,336],[141,330],[166,309],[188,292],[212,288],[236,284],[260,274],[285,270],[309,235],[334,190],[358,167],[381,172],[405,172],[428,220],[452,272],[476,290],[500,304],[524,330],[549,344],[571,338],[596,342],[620,347],[645,340],[667,322],[692,328],[717,333],[739,328],[764,337],[788,350],[811,358],[836,366],[860,376],[883,380],[907,368],[932,352],[955,347],[980,340],[1004,314],[1028,313],[1051,322],[1075,326],[1100,325],[1122,324],[1147,318],[1172,310],[1194,292],[1219,290],[1243,288],[1267,294],[1290,300],[1315,290],[1340,270],[1363,268],[1387,255],[1411,241],[1434,265],[1458,300],[1483,300],[1506,300],[1530,312],[1555,318]])
    .concat(p7([[0,322],[10,325],[30,345],[55,365],[75,370],[97,371],[119,374],[141,377],[163,378],[185,374],[207,373],[229,373],[251,370],[273,362],[295,375],[317,382],[340,365],[361,363],[383,356],[405,320],[427,301],[450,310],[472,295],[495,291],[516,310],[538,314],[561,310],[582,300],[605,275],[627,266],[648,265],[670,265],[692,285],[713,320],[736,338],[759,330],[781,327],[803,285],[825,282],[848,220],[869,190],[891,157],[913,157],[935,136],[957,150],[980,180],[1001,195],[1023,208],[1046,240],[1067,298],[1090,296],[1112,310],[1134,314],[1156,278],[1178,264],[1201,282],[1222,295],[1244,306],[1267,332],[1288,318],[1310,270],[1333,210],[1353,165],[1376,118],[1399,100],[1421,88],[1442,85],[1465,70]]));
  var MAC = p6([[117,350],[141,344],[166,330],[188,318],[212,315],[236,312],[260,302],[285,290],[309,268],[334,240],[358,224],[381,224],[405,224],[428,228],[452,233],[476,230],[500,238],[524,250],[549,280],[571,305],[596,318],[620,322],[645,330],[667,333],[692,335],[717,336],[739,340],[764,340],[788,342],[811,348],[836,350],[860,354],[883,358],[907,364],[932,358],[955,358],[980,358],[1004,346],[1028,342],[1051,338],[1075,338],[1100,326],[1122,320],[1147,316],[1172,315],[1194,310],[1219,308],[1243,306],[1267,307],[1290,307],[1315,290],[1340,280],[1363,276],[1387,272],[1411,272],[1434,282],[1458,286],[1483,286],[1506,276],[1530,277],[1555,298]])
    .concat(p7([[0,307],[30,320],[55,333],[75,345],[97,346],[119,349],[141,356],[163,370],[185,371],[207,372],[229,372],[251,372],[273,371],[295,375],[317,378],[340,368],[361,368],[383,358],[405,347],[427,342],[450,338],[472,332],[495,326],[516,312],[538,307],[561,309],[582,300],[605,287],[627,290],[648,289],[670,289],[692,290],[713,298],[736,304],[759,303],[781,296],[803,286],[825,297],[848,280],[869,255],[891,236],[913,224],[935,200],[957,185],[980,178],[1001,173],[1023,180],[1046,186],[1067,228],[1090,236],[1112,252],[1134,258],[1156,262],[1178,280],[1201,287],[1222,300],[1244,310],[1267,308],[1288,296],[1310,278],[1333,265],[1353,248],[1376,228],[1399,212],[1421,180],[1442,152],[1465,127]]));
  line(K, MAY, '#c8c800');
  line(K, MAC, '#00a8c8');
  txt(K, 45, 609, '2153万', '#a8a8a8', 'end');
  txt(K, 45, 657, '1077万', '#a8a8a8', 'end');

  /* ---- signal dots ---- */
  CS.forEach(function (c, i) {
    var red = (i >= 29 && i <= 34) || (i >= 64 && i <= 98) || (i >= 110 && i <= 123);
    el(K, 'ellipse', { cx: X(i) + .5, cy: 713, rx: 4.5, ry: 6, fill: red ? '#e80000' : '#00e800' });
  });

  /* ---- pane rules ---- */
  hline(K, 2, 1459, 706, '#a0a0a0');
  hline(K, 2, 1459, 720, '#c8c8c8', null, 2);
  hline(K, 47, 1459, 735, '#a8a8a8');
  hline(K, 2, 1459, 870, '#c0c0c0');
  hline(K, 47, 1459, 883, '#a8a8a8');

  /* ---- MACD ---- */
  txt(K, 47, 729, '指数平滑异同平均线(MACD)', '#f0f0f0');
  hline(K, 47, 154, 734, '#e0e0e0');
  txt(K, 209, 729, 'DIFF:7.549', yel);
  txt(K, 287, 729, 'DEA:2.396', '#f0f0f0');
  txt(K, 358, 729, 'MACD:5.153', '#ff00ff');
  [[762, '10.857'], [802, '0.000'], [842, '-10.857']].forEach(function (g) {
    hline(K, 47, 1459, g[0], GRID, DASH);
    txt(K, 46, g[0], g[1], '#a8a8a8', 'end');
  });
  var HT = [729,729,729,724,724,726,720,714,708,699,699,702,702,711,714,717,724,729,735,735,741,744,744,741,738,738,738,741,741,738,741,744,744,741,732,729,724,717,720,720,723,720,717,717,714,711,714,723,729,729,726,717,714,711,714,720,723,723,723,729,735,
    735,735,747,750,750,750,756,762,766,768,774,780,786,792,798,798,789,771,753,744,738,729,717,705,702,693,684,684,690,693,699,705,717,720,717,708,696,681,669,663,666,675,684,693,693,699,714,729,747,759,768,765,762,768,771,774,768,756,741,724,714,708,699,684,678,675,669];
  var ZERO = 802;
  HT.forEach(function (z, i) {
    var y = Math.round(560 + z / 3), x = Math.round(X(i)) - 4;
    if (z < 727) rect(K, x, y, 8, ZERO - y + 1, '#ff00ff');
    else rect(K, x, ZERO, 8, Math.max(1, y - ZERO), '#00ffff');
  });
  var DIFF = p6([[117,696],[166,694],[212,692],[260,684],[285,678],[309,670],[334,650],[358,640],[381,634],[405,631],[428,631],[452,633],[500,635],[524,646],[571,654],[596,666],[620,673],[667,680],[717,684],[739,688],[788,698],[836,708],[860,716],[883,721],[907,721],[932,716],[980,706],[1004,698],[1075,697],[1122,690],[1172,682],[1219,671],[1243,680],[1267,688],[1315,682],[1340,668],[1363,662],[1387,658],[1411,659],[1434,662],[1483,664],[1506,662],[1530,666],[1555,676]])
    .concat(p7([[0,679],[30,680],[53,690],[75,710],[119,720],[163,755],[207,775],[251,818],[295,870],[340,918],[361,926],[383,922],[427,906],[472,898],[516,868],[538,855],[582,812],[605,802],[627,798],[670,790],[713,797],[759,798],[803,758],[848,708],[891,665],[935,645],[980,640],[1001,640],[1046,665],[1090,715],[1134,755],[1178,780],[1222,800],[1244,805],[1288,790],[1353,745],[1399,700],[1442,668],[1465,645]]));
  var DEA = p6([[117,692],[166,692],[212,691],[260,690],[309,682],[358,665],[405,652],[452,645],[500,640],[549,645],[596,653],[620,657],[667,665],[739,676],[788,685],[836,690],[883,704],[907,707],[932,709],[980,708],[1028,703],[1075,700],[1122,696],[1172,690],[1219,682],[1267,685],[1315,682],[1363,675],[1411,667],[1483,665],[1555,667]])
    .concat(p7([[0,671],[30,675],[75,685],[141,705],[185,725],[229,745],[273,780],[295,795],[340,845],[383,878],[427,890],[472,892],[516,885],[561,865],[605,840],[670,815],[713,808],[759,806],[803,790],[848,760],[891,725],[935,695],[980,670],[1023,660],[1067,665],[1112,692],[1156,715],[1201,745],[1244,765],[1288,775],[1353,765],[1399,745],[1442,722],[1465,710]]));
  line(K, DEA, '#fff');
  line(K, DIFF, yel);

  /* ---- turnover ---- */
  txt(K, 47, 876, '换手涨跌(ErZd)', '#f0f0f0');
  txt(K, 144, 876, '11.786', yel);
  [993, 1006, 1012, 1015].forEach(function (y) { hline(K, 47, 1459, y, GRID, DASH); });
  txt(K, 46, 993, '300.000', '#a8a8a8', 'end');
  txt(K, 46, 1005, '100.000', '#a8a8a8', 'end');
  var TO = p8([[80,400],[314,403],[335,403],[355,392],[375,404],[395,402],[415,390],[440,402],[480,402],[500,382],[520,400],[545,404],[565,389],[580,389],[605,407],[625,398],[650,394],[670,402],[695,398],[710,404],[730,386],[755,405],[795,376],[835,402],[875,385],[905,406],[925,398],[945,404],[965,385],[1000,400],[1030,396],[1060,400],[1090,398],[1130,400],[1152,372],[1185,402],[1210,398],[1235,398],[1255,405],[1297,381],[1330,404],[1340,406],[1380,394],[1420,400],[1460,394],[1520,398],[1548,388]])
    .concat(p11([[30,395],[60,396],[80,388],[105,406],[133,412],[160,12],[185,410],[212,380],[235,384],[265,410],[290,394],[345,394],[365,400],[395,402],[420,388],[470,388],[500,404],[550,398],[575,404],[620,395],[655,382],[685,396],[710,385],[735,404],[763,358],[787,398],[815,397],[840,400],[870,399],[890,392],[920,402],[945,392],[985,410],[1023,412],[1050,55],[1078,400],[1130,398],[1155,406],[1180,394],[1205,400],[1235,395],[1260,406],[1285,370],[1310,375],[1338,397],[1375,397],[1415,403],[1445,385],[1470,400],[1492,395]]));
  line(K, TO, yel);
  hline(K, 2, 1459, 1019, '#d0d0d0');

  /* ---- chip distribution (right panel) ---- */
  txt(C, 1464, 114, '2015-08-04 星期二', '#fff');
  txt(C, 1464, 127, '套牢盘: 83.57 95.17', '#fff');
  var CY = [[100,1350],[112,1350],[124,1350],[133,1305],[145,1266],[157,1179],[169,1119],[181,1080],[193,1080],[205,1080],[217,999],[229,999],[241,1143],[253,1032],[265,1032],[277,1032],[286,987],[298,918],[310,1011],[322,1011],[334,1059],[346,1077],[358,1128],[370,1077],[382,1134],[394,1179],[406,1056],[418,1062],[430,1062],[442,1095],[451,1035],[463,990],[475,969],[487,975],[499,930],[511,885],[523,861],[535,978],[547,1017],[559,1023],[571,1053],[583,1080],[595,1041],[604,1062],[616,1176],[628,1218],[640,1218],[652,1206],[664,1215],[676,1251],[688,1284],[700,1284],[712,1302],[724,1167],[736,1167],[748,1185],[760,945],[769,945],[781,909],[793,945],[805,945],[817,819],[829,681],[841,681],[853,759],[865,639],[877,504],[889,345],[901,276],[913,276],[922,72],[934,72],[946,147],[958,117],[970,408],[982,570]];
  var YL = [[994,495],[1006,534],[1018,645],[1030,645],[1042,741],[1054,855],[1066,1035],[1078,1260],[1087,1260],[1099,1260],[1111,1260],[1123,1275],[1135,1275],[1147,1257],[1159,1323],[1171,1323],[1183,1323],[1195,1323],[1207,1281],[1219,1323],[1231,1323],[1240,1323],[1252,1323],[1264,1323]];
  function chips(list, col) {
    list.forEach(function (q) {
      hline(C, 1440 + q[1] / 3, 1910, Math.round(130 + q[0] / 3), col);
    });
  }
  chips(CY, '#00a0c0');
  chips(YL, '#c0c000');
  vline(C, 1791, 153, 466, '#d0d0d0', '4 3');
  vline(C, 1791, 506, 720, '#d0d0d0', '4 3');
  hline(C, 1461, 1770, 486, '#e8e8e8', DASH);
  hline(C, 1811, 1910, 486, '#e8e8e8', DASH);
  rect(C, 1462, 480, 32, 12, '#000');
  txt(C, 1463, 487, '0.91%', '#fff');
  el(C, 'polygon', { points: '1463,382 1472,387.500 1463,393', fill: yel });

  txt(C, 1465, 703, '获利盘: 16.43 4.83', '#fff');
  rect(C, 1463, 709, 446, 10, '#fff');
  rect(C, 1464, 710, 370, 8, '#00a0c0');
  rect(C, 1834, 710, 74, 8, '#c0c000');
  hline(C, 1461, 1911, 720, '#c8c8c8', null, 2);

  txt(C, 1464, 731, '夏', '#fff', 'start', 'mid');
  rect(C, 1525, 986, 64, 4, RED);
  rect(C, 1653, 754, 65, 236, '#ff00ff');
  rect(C, 1782, 780, 64, 210, GRN);
  txt(C, 1556, 978, '13', '#fff', 'middle');
  txt(C, 1685, 746, '732', '#fff', 'middle');
  txt(C, 1813, 772, '654', '#fff', 'middle');
  txt(C, 1556, 998, '牛', '#fff', 'middle', 'mid');
  txt(C, 1685, 998, '马', '#fff', 'middle', 'mid');
  txt(C, 1813, 998, '熊', '#fff', 'middle', 'mid');
  vline(C, 1791, 720, 1005, '#808080', '4 3');
  rect(C, 1686, 1005, 225, 14, '#c0c0c0');
  txt(C, 1573, 1012, '牛马熊', '#fff', 'middle', 'mid');
  txt(C, 1798, 1012, '分时图', '#000', 'middle', 'mid');
  hline(C, 1461, 1911, 1019, '#d0d0d0');
})();
```
